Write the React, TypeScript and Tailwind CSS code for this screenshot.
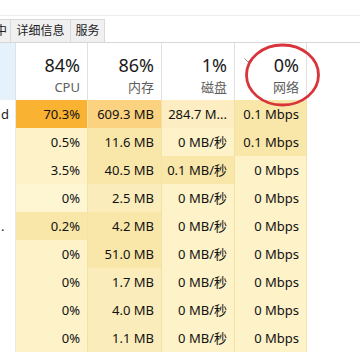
import React from "react";

type Cell = { v: string; bg: string };

const L = "bg-[#fdf2c8]";
const M = "bg-[#f9e7a9]";

const rows: { name: string; cells: Cell[] }[] = [
  {
    name: "d",
    cells: [
      { v: "70.3%", bg: "bg-[#f9b232]" },
      { v: "609.3 MB", bg: "bg-[#fbd27f]" },
      { v: "284.7 M...", bg: "bg-[#fcedc2]" },
      { v: "0.1 Mbps", bg: M },
    ],
  },
  {
    name: "",
    cells: [
      { v: "0.5%", bg: L },
      { v: "11.6 MB", bg: M },
      { v: "0 MB/秒", bg: L },
      { v: "0.1 Mbps", bg: M },
    ],
  },
  {
    name: "",
    cells: [
      { v: "3.5%", bg: L },
      { v: "40.5 MB", bg: M },
      { v: "0.1 MB/秒", bg: M },
      { v: "0 Mbps", bg: L },
    ],
  },
  {
    name: "",
    cells: [
      { v: "0%", bg: "bg-[#fef6d3]" },
      { v: "2.5 MB", bg: "bg-[#fbedbb]" },
      { v: "0 MB/秒", bg: L },
      { v: "0 Mbps", bg: L },
    ],
  },
  {
    name: ".",
    cells: [
      { v: "0.2%", bg: M },
      { v: "4.2 MB", bg: M },
      { v: "0 MB/秒", bg: L },
      { v: "0 Mbps", bg: L },
    ],
  },
  {
    name: "",
    cells: [
      { v: "0%", bg: L },
      { v: "51.0 MB", bg: M },
      { v: "0 MB/秒", bg: L },
      { v: "0 Mbps", bg: L },
    ],
  },
  {
    name: "",
    cells: [
      { v: "0%", bg: L },
      { v: "1.7 MB", bg: "bg-[#fbedbb]" },
      { v: "0 MB/秒", bg: L },
      { v: "0 Mbps", bg: L },
    ],
  },
  {
    name: "",
    cells: [
      { v: "0%", bg: L },
      { v: "4.0 MB", bg: "bg-[#fbedbb]" },
      { v: "0 MB/秒", bg: L },
      { v: "0 Mbps", bg: L },
    ],
  },
  {
    name: "",
    cells: [
      { v: "0%", bg: L },
      { v: "1.1 MB", bg: "bg-[#fbedbb]" },
      { v: "0 MB/秒", bg: L },
      { v: "0 Mbps", bg: L },
    ],
  },
];

const widths = ["w-[72px]", "w-[74px]", "w-[73px]", "w-[72px]"];

const headers = [
  { pct: "84%", label: "CPU" },
  { pct: "86%", label: "内存" },
  { pct: "1%", label: "磁盘" },
  { pct: "0%", label: "网络" },
];

export default function App() {
  return (
    <div className="relative w-[360px] h-[353px] overflow-hidden bg-white font-['Noto_Sans','Noto_Sans_CJK_SC',sans-serif] text-[#111]">
      {/* top strip */}
      <div className="h-[16px] border-b border-[#ececec]" />
      <div className="h-[3px]" />

      {/* tabs */}
      <div className="flex h-[24px] border-b border-[#d6d6d6] text-[12px] leading-none text-[#222]">
        <div className="w-[11px] overflow-hidden border-r border-t border-[#d9d9d9] bg-[#f0f0f0] flex items-center justify-end">
          <span className="shrink-0 mr-[3px]">中</span>
        </div>
        <div className="w-[60px] border-r border-t border-[#d9d9d9] bg-[#f0f0f0] flex items-center justify-center">
          详细信息
        </div>
        <div className="w-[34px] border-r border-t border-[#d9d9d9] bg-[#f0f0f0] flex items-center justify-center">
          服务
        </div>
      </div>

      {/* header */}
      <div className="flex h-[57px]">
        <div className="w-[16px] bg-[#e5f1fb] border-r border-[#e2e2e2]" />
        {headers.map((h, i) => (
          <div
            key={h.label}
            className={`${widths[i]} relative flex flex-col items-end pr-[7px] border-r border-[#e2e2e2]`}
          >
            {i === 3 && (
              <svg
                className="absolute left-[9px] top-[15px]"
                width="8"
                height="5"
                viewBox="0 0 8 5"
              >
                <path d="M0.5 0.5 L4 4 L7.5 0.5" fill="none" stroke="#8a8a8a" strokeWidth="1" />
              </svg>
            )}
            <div className="mt-[11px] text-[18px] leading-[22px] text-[#1a1a1a]">{h.pct}</div>
            <div className="mt-[3px] text-[13px] leading-[16px] text-[#5e5e5e]">{h.label}</div>
          </div>
        ))}
      </div>

      {/* rows */}
      {rows.map((r, ri) => (
        <div key={ri} className="flex h-[28px] text-[13px] leading-[28px]">
          <div className="w-[16px] overflow-hidden border-r border-[#e8e8e8] pl-[1px] text-[#222]">
            {r.name}
          </div>
          {r.cells.map((c, ci) => (
            <div
              key={ci}
              className={`${widths[ci]} ${c.bg} text-right pr-[7px] whitespace-nowrap overflow-hidden border-r border-[#f3e2a6]`}
            >
              {c.v}
            </div>
          ))}
        </div>
      ))}

      {/* red annotation circle */}
      <svg className="absolute left-0 top-0 pointer-events-none" width="360" height="353">
        <ellipse cx="282.5" cy="75" rx="36" ry="30" fill="none" stroke="#d8343a" strokeWidth="2.8" />
      </svg>
    </div>
  );
}
